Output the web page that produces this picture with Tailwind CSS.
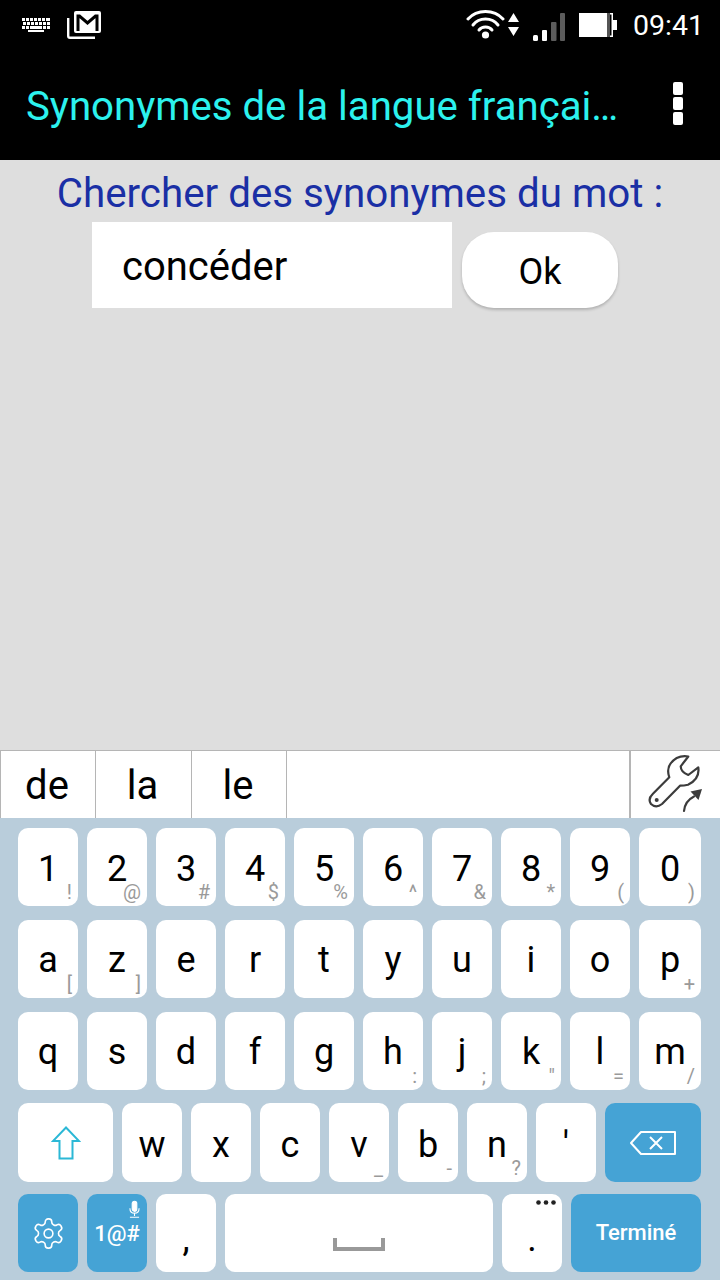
<!DOCTYPE html>
<html lang="fr">
<head>
  <meta charset="UTF-8" />
  <meta name="viewport" content="width=device-width, initial-scale=1" />
  <title>Synonymes de la langue française</title>
  <script src="https://cdn.jsdelivr.net/npm/@tailwindcss/browser@4"></script>
</head>
<body class="w-[720px] h-[1280px] overflow-hidden flex flex-col bg-[#dedede] font-['Roboto',sans-serif]">

  <!-- barre d'état -->
  <div class="h-[48px] bg-black flex items-start text-white shrink-0">
    <svg class="ml-[22px] mt-[18px]" width="28" height="14" viewBox="0 0 28 14" fill="#fff">
      <path d="M0 0h3v3H0zM4 0h3v3H4zM8 0h3v3H8zM12 0h3v3h-3zM16 0h3v3h-3zM20 0h3v3h-3zM24 0h4v3h-4zM1 4h3v3H1zM5 4h3v3H5zM9 4h3v3H9zM13 4h3v3h-3zM17 4h3v3h-3zM21 4h3v3h-3zM25 4h3v3h-3zM0 8h3v3H0zM4 8h3v3H4zM8 8h12v3H8zM21 8h3v3h-3zM25 8h3v3h-3zM6 12h16v2H6z"/>
    </svg>
    <svg class="ml-[17px] mt-[11px]" width="34" height="28" viewBox="0 0 34 28">
      <path d="M1.2 7v18a1.8 1.8 0 0 0 1.8 1.8h25" fill="none" stroke="#fff" stroke-width="2.4"/>
      <rect x="7" y="0" width="27" height="22" rx="2" fill="#fff"/>
      <path d="M11 20V5h1.5L20.5 12 28.500 5H30V20" fill="none" stroke="#000" stroke-width="3"/>
    </svg>
    <svg class="ml-[365px] mt-[8px]" width="39" height="33" viewBox="0 0 39 33" fill="none" stroke="#fff" stroke-linecap="round">
      <path d="M2 11C11 1 28 1 37 11" stroke-width="3"/>
      <path d="M7 17C13 9 26 9 32 17" stroke-width="3"/>
      <path d="M13 22C16 18 23 18 26 22" stroke-width="3"/>
      <circle cx="19.500" cy="27" r="3.600" fill="#fff" stroke="none"/>
    </svg>
    <svg class="ml-[3px] mt-[13px]" width="11" height="24" viewBox="0 0 11 24" fill="#fff">
      <path d="M5.500 0L11 9H0zM0 14h11l-5.500 9z"/>
    </svg>
    <svg class="ml-[14px] mt-[13px]" width="32" height="28" viewBox="0 0 32 28">
      <rect x="0" y="22" width="5" height="6" rx="1.500" fill="#fff"/>
      <rect x="9" y="17" width="5" height="11" rx="1" fill="#fff"/>
      <rect x="18" y="9" width="5.500" height="19" rx="1" fill="#5c5c5c"/>
      <rect x="27" y="0" width="5" height="28" rx="1" fill="#5c5c5c"/>
    </svg>
    <svg class="ml-[14px] mt-[12px]" width="38" height="26" viewBox="0 0 38 26">
      <rect x="0" y="1" width="28" height="24" fill="#fff"/>
      <rect x="28" y="1" width="3" height="24" fill="#555"/>
      <path d="M31 1h3v24h-3v-1.500h1.500v-21H31z" fill="#fff"/>
      <rect x="34" y="8" width="4" height="10" fill="#fff"/>
    </svg>
    <span class="ml-[16px] mt-[8px] text-[28.500px] leading-[36px]">09:41</span>
  </div>

  <!-- barre d'action -->
  <header class="h-[112px] bg-black flex items-center shrink-0 pl-[26px]">
    <h1 class="w-[647px] text-[40.200px] leading-[48px] text-[#2cf2ee] whitespace-nowrap overflow-hidden mt-[6px]">Synonymes de la langue françai…</h1>
    <div class="flex flex-col gap-[2px] -mt-[2px]">
      <span class="block w-[10px] h-[13px] rounded-[2px] bg-white"></span>
      <span class="block w-[10px] h-[13px] rounded-[2px] bg-white"></span>
      <span class="block w-[10px] h-[13px] rounded-[2px] bg-white"></span>
    </div>
  </header>

  <main class="flex-1 flex flex-col">
    <p class="h-[62px] text-center text-[40.300px] leading-[67px] text-[#1a2fa5]">Chercher des synonymes du mot :</p>
    <div class="flex items-end pl-[92px] gap-[10px]">
      <input type="text" value="concéder" class="w-[360px] h-[86px] bg-white pl-[30px] pt-[3px] text-[40px] text-black outline-none" />
      <button type="button" class="w-[156px] h-[76px] bg-white rounded-[32px] pt-[4px] text-[36px] text-black shadow-[0_2px_3px_rgba(0,0,0,0.2)]">Ok</button>
    </div>
  </main>

  <!-- clavier -->
  <section class="h-[530px] shrink-0 bg-[#b9cddb]">
    <div class="h-[68px] bg-white border-t border-[#b5b5b5] flex text-[40px] text-black">
      <div class="w-[96px] border-l border-r border-[#b5b5b5] flex items-center justify-center pt-[3px] pr-[2px]">de</div>
      <div class="w-[96px] border-r border-[#b5b5b5] flex items-center justify-center pt-[3px] pr-[2px]">la</div>
      <div class="w-[95px] border-r border-[#b5b5b5] flex items-center justify-center pt-[3px] pr-[2px]">le</div>
      <div class="flex-1"></div>
      <div class="w-[91px] border-l-2 border-[#b5b5b5] flex items-start">
        <svg class="ml-[9px]" width="72" height="67" viewBox="0 0 72 67" fill="none" stroke="#3c3c3c" stroke-width="2.200" stroke-linejoin="round" stroke-linecap="round">
          <path d="M48.300 5.500L40.700 15.300Q40.700 21 48.300 24L58.300 16.300Q60 28 48 33.700Q44 34.700 40 34.700L22 53Q16 57.700 11 53Q7.500 48 12.700 43L29.300 26.300Q25 14 36.700 7Q42 4.500 48.300 5.500Z"/>
          <circle cx="16.700" cy="49" r="2" fill="#3c3c3c" stroke="none"/>
          <path d="M44 60Q45 50 54 45.500"/>
          <path d="M50.500 40.500L62 38L58.500 49Z" fill="#3c3c3c" stroke="none"/>
        </svg>
      </div>
    </div>

    <div class="pt-[10px] pl-[18px] flex flex-col gap-[14px]">
      <div class="flex gap-[9px]">
        <div class="relative w-[60px] h-[78px] rounded-[10px] bg-white flex items-center justify-center pt-[4px] text-[36px] leading-[36px] text-black">1<span class="absolute right-[6px] bottom-[3px] text-[20px] leading-[22px] text-[#9a9a9a]">!</span></div>
        <div class="relative w-[60px] h-[78px] rounded-[10px] bg-white flex items-center justify-center pt-[4px] text-[36px] leading-[36px] text-black">2<span class="absolute right-[6px] bottom-[3px] text-[20px] leading-[22px] text-[#9a9a9a]">@</span></div>
        <div class="relative w-[60px] h-[78px] rounded-[10px] bg-white flex items-center justify-center pt-[4px] text-[36px] leading-[36px] text-black">3<span class="absolute right-[6px] bottom-[3px] text-[20px] leading-[22px] text-[#9a9a9a]">#</span></div>
        <div class="relative w-[60px] h-[78px] rounded-[10px] bg-white flex items-center justify-center pt-[4px] text-[36px] leading-[36px] text-black">4<span class="absolute right-[6px] bottom-[3px] text-[20px] leading-[22px] text-[#9a9a9a]">$</span></div>
        <div class="relative w-[60px] h-[78px] rounded-[10px] bg-white flex items-center justify-center pt-[4px] text-[36px] leading-[36px] text-black">5<span class="absolute right-[6px] bottom-[3px] text-[20px] leading-[22px] text-[#9a9a9a]">%</span></div>
        <div class="relative w-[60px] h-[78px] rounded-[10px] bg-white flex items-center justify-center pt-[4px] text-[36px] leading-[36px] text-black">6<span class="absolute right-[6px] bottom-[3px] text-[20px] leading-[22px] text-[#9a9a9a]">^</span></div>
        <div class="relative w-[60px] h-[78px] rounded-[10px] bg-white flex items-center justify-center pt-[4px] text-[36px] leading-[36px] text-black">7<span class="absolute right-[6px] bottom-[3px] text-[20px] leading-[22px] text-[#9a9a9a]">&amp;</span></div>
        <div class="relative w-[60px] h-[78px] rounded-[10px] bg-white flex items-center justify-center pt-[4px] text-[36px] leading-[36px] text-black">8<span class="absolute right-[6px] bottom-[3px] text-[20px] leading-[22px] text-[#9a9a9a]">*</span></div>
        <div class="relative w-[60px] h-[78px] rounded-[10px] bg-white flex items-center justify-center pt-[4px] text-[36px] leading-[36px] text-black">9<span class="absolute right-[6px] bottom-[3px] text-[20px] leading-[22px] text-[#9a9a9a]">(</span></div>
        <div class="relative w-[62px] h-[78px] rounded-[10px] bg-white flex items-center justify-center pt-[4px] text-[36px] leading-[36px] text-black">0<span class="absolute right-[6px] bottom-[3px] text-[20px] leading-[22px] text-[#9a9a9a]">)</span></div>
      </div>

      <div class="flex gap-[9px]">
        <div class="relative w-[60px] h-[78px] rounded-[10px] bg-white flex items-center justify-center pt-[2px] text-[36px] leading-[36px] text-black">a<span class="absolute right-[6px] bottom-[3px] text-[20px] leading-[22px] text-[#9a9a9a]">[</span></div>
        <div class="relative w-[60px] h-[78px] rounded-[10px] bg-white flex items-center justify-center pt-[2px] text-[36px] leading-[36px] text-black">z<span class="absolute right-[6px] bottom-[3px] text-[20px] leading-[22px] text-[#9a9a9a]">]</span></div>
        <div class="w-[60px] h-[78px] rounded-[10px] bg-white flex items-center justify-center pt-[2px] text-[36px] leading-[36px] text-black">e</div>
        <div class="w-[60px] h-[78px] rounded-[10px] bg-white flex items-center justify-center pt-[2px] text-[36px] leading-[36px] text-black">r</div>
        <div class="w-[60px] h-[78px] rounded-[10px] bg-white flex items-center justify-center pt-[2px] text-[36px] leading-[36px] text-black">t</div>
        <div class="w-[60px] h-[78px] rounded-[10px] bg-white flex items-center justify-center pt-[2px] text-[36px] leading-[36px] text-black">y</div>
        <div class="w-[60px] h-[78px] rounded-[10px] bg-white flex items-center justify-center pt-[2px] text-[36px] leading-[36px] text-black">u</div>
        <div class="w-[60px] h-[78px] rounded-[10px] bg-white flex items-center justify-center pt-[2px] text-[36px] leading-[36px] text-black">i</div>
        <div class="w-[60px] h-[78px] rounded-[10px] bg-white flex items-center justify-center pt-[2px] text-[36px] leading-[36px] text-black">o</div>
        <div class="relative w-[62px] h-[78px] rounded-[10px] bg-white flex items-center justify-center pt-[2px] text-[36px] leading-[36px] text-black">p<span class="absolute right-[6px] bottom-[3px] text-[20px] leading-[22px] text-[#9a9a9a]">+</span></div>
      </div>

      <div class="flex gap-[9px]">
        <div class="w-[60px] h-[78px] rounded-[10px] bg-white flex items-center justify-center pt-[2px] text-[36px] leading-[36px] text-black">q</div>
        <div class="w-[60px] h-[78px] rounded-[10px] bg-white flex items-center justify-center pt-[2px] text-[36px] leading-[36px] text-black">s</div>
        <div class="w-[60px] h-[78px] rounded-[10px] bg-white flex items-center justify-center pt-[2px] text-[36px] leading-[36px] text-black">d</div>
        <div class="w-[60px] h-[78px] rounded-[10px] bg-white flex items-center justify-center pt-[2px] text-[36px] leading-[36px] text-black">f</div>
        <div class="w-[60px] h-[78px] rounded-[10px] bg-white flex items-center justify-center pt-[2px] text-[36px] leading-[36px] text-black">g</div>
        <div class="relative w-[60px] h-[78px] rounded-[10px] bg-white flex items-center justify-center pt-[2px] text-[36px] leading-[36px] text-black">h<span class="absolute right-[6px] bottom-[3px] text-[20px] leading-[22px] text-[#9a9a9a]">:</span></div>
        <div class="relative w-[60px] h-[78px] rounded-[10px] bg-white flex items-center justify-center pt-[2px] text-[36px] leading-[36px] text-black">j<span class="absolute right-[6px] bottom-[3px] text-[20px] leading-[22px] text-[#9a9a9a]">;</span></div>
        <div class="relative w-[60px] h-[78px] rounded-[10px] bg-white flex items-center justify-center pt-[2px] text-[36px] leading-[36px] text-black">k<span class="absolute right-[6px] bottom-[3px] text-[20px] leading-[22px] text-[#9a9a9a]">"</span></div>
        <div class="relative w-[60px] h-[78px] rounded-[10px] bg-white flex items-center justify-center pt-[2px] text-[36px] leading-[36px] text-black">l<span class="absolute right-[6px] bottom-[3px] text-[20px] leading-[22px] text-[#9a9a9a]">=</span></div>
        <div class="relative w-[62px] h-[78px] rounded-[10px] bg-white flex items-center justify-center pt-[2px] text-[36px] leading-[36px] text-black">m<span class="absolute right-[6px] bottom-[3px] text-[20px] leading-[22px] text-[#9a9a9a]">/</span></div>
      </div>

      <div class="flex gap-[9px] -mt-[1px]">
        <div class="w-[95px] h-[79px] rounded-[10px] bg-white flex items-center justify-center">
          <svg width="30" height="34" viewBox="0 0 30 34" fill="none" stroke="#2bb8d6" stroke-width="2">
            <path d="M15 1.500L28 15H21.500V32.500H8.500V15H2Z"/>
          </svg>
        </div>
        <div class="w-[60px] h-[79px] rounded-[10px] bg-white flex items-center justify-center pt-[4px] text-[36px] leading-[36px] text-black">w</div>
        <div class="w-[60px] h-[79px] rounded-[10px] bg-white flex items-center justify-center pt-[4px] text-[36px] leading-[36px] text-black">x</div>
        <div class="w-[60px] h-[79px] rounded-[10px] bg-white flex items-center justify-center pt-[4px] text-[36px] leading-[36px] text-black">c</div>
        <div class="relative w-[60px] h-[79px] rounded-[10px] bg-white flex items-center justify-center pt-[4px] text-[36px] leading-[36px] text-black">v<span class="absolute right-[6px] bottom-[3px] text-[20px] leading-[22px] text-[#9a9a9a]">_</span></div>
        <div class="relative w-[60px] h-[79px] rounded-[10px] bg-white flex items-center justify-center pt-[4px] text-[36px] leading-[36px] text-black">b<span class="absolute right-[6px] bottom-[3px] text-[20px] leading-[22px] text-[#9a9a9a]">-</span></div>
        <div class="relative w-[60px] h-[79px] rounded-[10px] bg-white flex items-center justify-center pt-[4px] text-[36px] leading-[36px] text-black">n<span class="absolute right-[6px] bottom-[3px] text-[20px] leading-[22px] text-[#9a9a9a]">?</span></div>
        <div class="w-[60px] h-[79px] rounded-[10px] bg-white flex items-center justify-center pt-[4px] text-[36px] leading-[36px] text-black">'</div>
        <div class="w-[96px] h-[79px] rounded-[10px] bg-[#45a3d5] flex items-center justify-center -ml-[0.5px]">
          <svg width="48" height="26" viewBox="0 0 48 26" fill="none" stroke="#fff" stroke-width="2">
            <path d="M12 2H46V24H12L2 13Z" stroke-linejoin="round"/>
            <path d="M21 7L33 19M33 7L21 19"/>
          </svg>
        </div>
      </div>

      <div class="flex gap-[9px] -mt-[2px]">
        <div class="w-[60px] h-[78px] rounded-[10px] bg-[#45a3d5] flex items-center justify-center">
          <svg width="35" height="35" viewBox="0 0 24 24" fill="none" stroke="#fff" stroke-width="1.100">
            <path d="M12.220 2h-.44a2 2 0 0 0-2 2v.18a2 2 0 0 1-1 1.730l-.43.25a2 2 0 0 1-2 0l-.15-.08a2 2 0 0 0-2.730.73l-.22.38a2 2 0 0 0 .73 2.730l.15.1a2 2 0 0 1 1 1.720v.51a2 2 0 0 1-1 1.740l-.15.09a2 2 0 0 0-.73 2.730l.22.38a2 2 0 0 0 2.730.73l.15-.08a2 2 0 0 1 2 0l.43.25a2 2 0 0 1 1 1.730V20a2 2 0 0 0 2 2h.44a2 2 0 0 0 2-2v-.18a2 2 0 0 1 1-1.730l.43-.25a2 2 0 0 1 2 0l.15.08a2 2 0 0 0 2.730-.73l.22-.39a2 2 0 0 0-.73-2.730l-.15-.08a2 2 0 0 1-1-1.740v-.5a2 2 0 0 1 1-1.740l.15-.09a2 2 0 0 0 .73-2.730l-.22-.38a2 2 0 0 0-2.730-.73l-.15.08a2 2 0 0 1-2 0l-.43-.25a2 2 0 0 1-1-1.730V4a2 2 0 0 0-2-2z"/>
            <circle cx="12" cy="12" r="3"/>
          </svg>
        </div>
        <div class="relative w-[60px] h-[78px] rounded-[10px] bg-[#45a3d5] flex items-center justify-center pt-[1px] text-[22px] leading-[26px] font-medium text-white">1@#
          <svg class="absolute right-[7px] top-[6px]" width="11" height="19" viewBox="0 0 12 20" fill="none" stroke="#fff" stroke-width="1.200">
            <rect x="3.500" y="1" width="5" height="11" rx="2.500" fill="#fff"/>
            <path d="M1 8.500c0 3.500 2 5.500 5 5.500s5-2 5-5.500M6 14v3M1 18.500h10"/>
          </svg>
        </div>
        <div class="w-[60px] h-[78px] rounded-[10px] bg-white flex items-center justify-center pt-[12px] text-[36px] leading-[36px] text-black">,</div>
        <div class="w-[268px] h-[78px] rounded-[10px] bg-white flex items-end justify-center pb-[21px]">
          <svg width="52" height="13" viewBox="0 0 52 13" fill="none" stroke="#999" stroke-width="4">
            <path d="M2 0V11H50V0"/>
          </svg>
        </div>
        <div class="relative w-[60px] h-[78px] rounded-[10px] bg-white flex items-center justify-center pt-[12px] text-[36px] leading-[36px] text-black">.
          <svg class="absolute right-[6px] top-[6px]" width="20" height="5" viewBox="0 0 20 5" fill="#222">
            <circle cx="2.500" cy="2.500" r="2.300"/><circle cx="10" cy="2.500" r="2.300"/><circle cx="17.500" cy="2.500" r="2.300"/>
          </svg>
        </div>
        <div class="w-[130px] h-[78px] rounded-[10px] bg-[#45a3d5] flex items-center justify-center text-[22px] leading-[26px] font-medium text-white">Terminé</div>
      </div>
    </div>
  </section>

</body>
</html>
